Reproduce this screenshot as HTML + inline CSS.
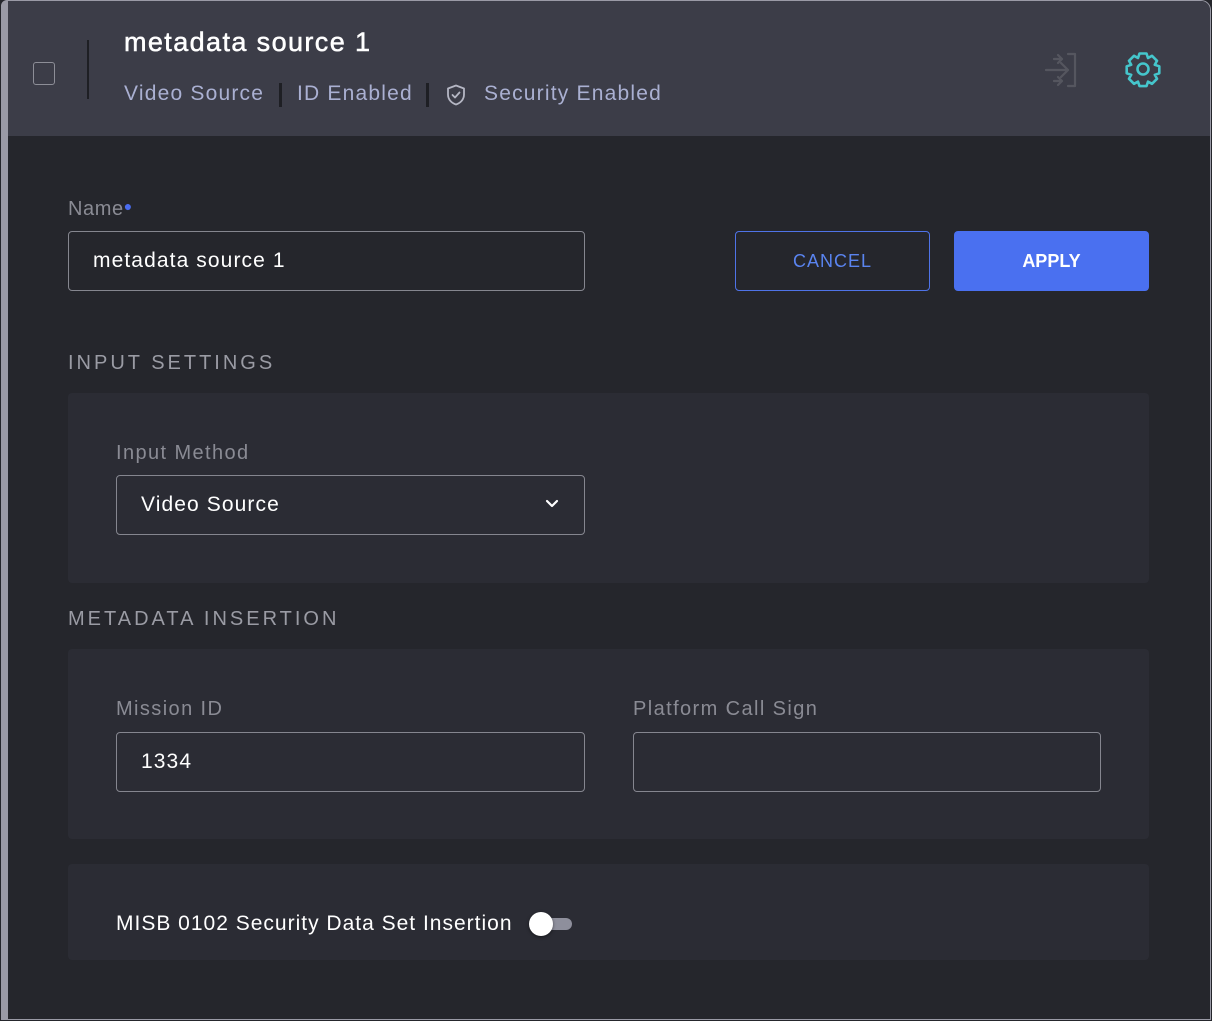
<!DOCTYPE html>
<html><head><style>
*{box-sizing:border-box;margin:0;padding:0}
body{width:1212px;height:1021px;background:#25262c;font-family:"Liberation Sans",sans-serif;position:relative;overflow:hidden}
.frame{position:absolute;left:1px;top:0;width:1210px;height:1020px;border:1px solid #9a9aa6;border-left:7px solid #9a9aa6;border-radius:6px 10px 0 0;overflow:hidden;background:#25262c}
.hdr{position:absolute;left:0;top:0;right:0;height:135px;background:#3c3d48}
.abs{position:absolute}
.t{color:#fff;font-size:27px;white-space:nowrap;letter-spacing:1.4px;-webkit-text-stroke:0.5px #fff}
.sub{color:#aab0d2;font-size:21px;white-space:nowrap;letter-spacing:1.2px}
.lbl{color:#8a8b94;font-size:20px;white-space:nowrap;letter-spacing:1.4px}
.sec{color:#9a9ba4;font-size:20px;letter-spacing:3px;white-space:nowrap}
.inp{position:absolute;border:1px solid #85868f;border-radius:4px;height:60px;color:#fff;font-size:21px;padding:0 24px;line-height:58px;letter-spacing:1.1px}
.box{position:absolute;background:#2b2c34;border-radius:4px}
</style></head><body>
<div class="frame">
<div class="hdr">
<div class="abs" style="left:25px;top:61px;width:22px;height:23px;border:1.5px solid #8d8e97;border-radius:3px"></div>
<div class="abs" style="left:79px;top:39px;width:2px;height:59px;background:#1e1f24"></div>
<div class="abs t" style="left:116px;top:26px">metadata source 1</div>
<div class="abs sub" style="left:116px;top:81px">Video Source</div>
<div class="abs" style="left:271px;top:82px;width:3px;height:24px;background:#1e1f24"></div>
<div class="abs sub" style="left:289px;top:81px">ID Enabled</div>
<div class="abs" style="left:418px;top:82px;width:3px;height:24px;background:#1e1f24"></div>
<svg class="abs" style="left:436px;top:82px" width="24" height="24" viewBox="0 0 24 24" fill="none" stroke="#b5b7c4" stroke-width="1.8" stroke-linejoin="round" stroke-linecap="round"><path d="M12 2.5l8 3v6c0 5-3.5 8.5-8 10-4.5-1.5-8-5-8-10v-6z"/><path d="M8.5 12l2.5 2.5 4.5-5"/></svg>
<div class="abs sub" style="left:476px;top:81px">Security Enabled</div>
<svg class="abs" style="left:1034px;top:50px" width="40" height="40" viewBox="0 0 40 40" fill="none" stroke="#55565f" stroke-width="2.2" stroke-linecap="round" stroke-linejoin="round"><path d="M26 3h7v32h-7"/><path d="M4 19h22M19 12l7 7-7 7"/><path d="M12 8h8M16 4l4 4-4 4"/><path d="M12 30h8M16 26l4 4-4 4"/></svg>
<svg class="abs" style="left:1115px;top:48px" width="40" height="40" viewBox="0 0 40 40" fill="none" stroke="#45c6cc" stroke-width="2.6" stroke-linejoin="round"><path d="M16.5 4.5h7l1.5 4.5 4-2.2 5 5-2.2 4 4.5 1.5v7l-4.5 1.5 2.2 4-5 5-4-2.2-1.5 4.5h-7l-1.5-4.5-4 2.2-5-5 2.2-4-4.5-1.5v-7l4.5-1.5-2.2-4 5-5 4 2.2z"/><circle cx="20" cy="20" r="5.5"/></svg>
</div>
<div class="abs lbl" style="left:60px;top:197px;letter-spacing:0.6px">Name<span style="color:#4a6cf0;font-size:14px;vertical-align:top">●</span></div>
<div class="inp" style="left:60px;top:230px;width:517px">metadata source 1</div>
<div class="abs" style="left:727px;top:230px;width:195px;height:60px;border:1px solid #4f73e8;border-radius:4px;color:#5a84f0;font-size:18px;text-align:center;line-height:58px;letter-spacing:1px">CANCEL</div>
<div class="abs" style="left:946px;top:230px;width:195px;height:60px;background:#4a70f0;border-radius:4px;color:#fff;font-size:18px;font-weight:bold;text-align:center;line-height:60px">APPLY</div>
<div class="abs sec" style="left:60px;top:351px">INPUT SETTINGS</div>
<div class="box" style="left:60px;top:392px;width:1081px;height:190px"></div>
<div class="abs lbl" style="left:108px;top:441px">Input Method</div>
<div class="inp" style="left:108px;top:474px;width:469px">Video Source
<svg class="abs" style="right:24px;top:22px" width="16" height="12" viewBox="0 0 16 12" fill="none" stroke="#fff" stroke-width="2.2" stroke-linecap="round" stroke-linejoin="round"><path d="M3 3l5 5 5-5"/></svg></div>
<div class="abs sec" style="left:60px;top:607px">METADATA INSERTION</div>
<div class="box" style="left:60px;top:648px;width:1081px;height:190px"></div>
<div class="abs lbl" style="left:108px;top:697px">Mission ID</div>
<div class="inp" style="left:108px;top:731px;width:469px">1334</div>
<div class="abs lbl" style="left:625px;top:697px">Platform Call Sign</div>
<div class="inp" style="left:625px;top:731px;width:468px"></div>
<div class="box" style="left:60px;top:863px;width:1081px;height:96px"></div>
<div class="abs" style="left:108px;top:911px;color:#fff;font-size:21px;white-space:nowrap;letter-spacing:1px">MISB 0102 Security Data Set Insertion</div>
<div class="abs" style="left:528px;top:917px;width:36px;height:12px;border-radius:6px;background:#8e8f9c"></div>
<div class="abs" style="left:521px;top:911px;width:24px;height:24px;border-radius:50%;background:#fff;box-shadow:0 1px 3px rgba(0,0,0,.5)"></div>
</div>
</body></html>
